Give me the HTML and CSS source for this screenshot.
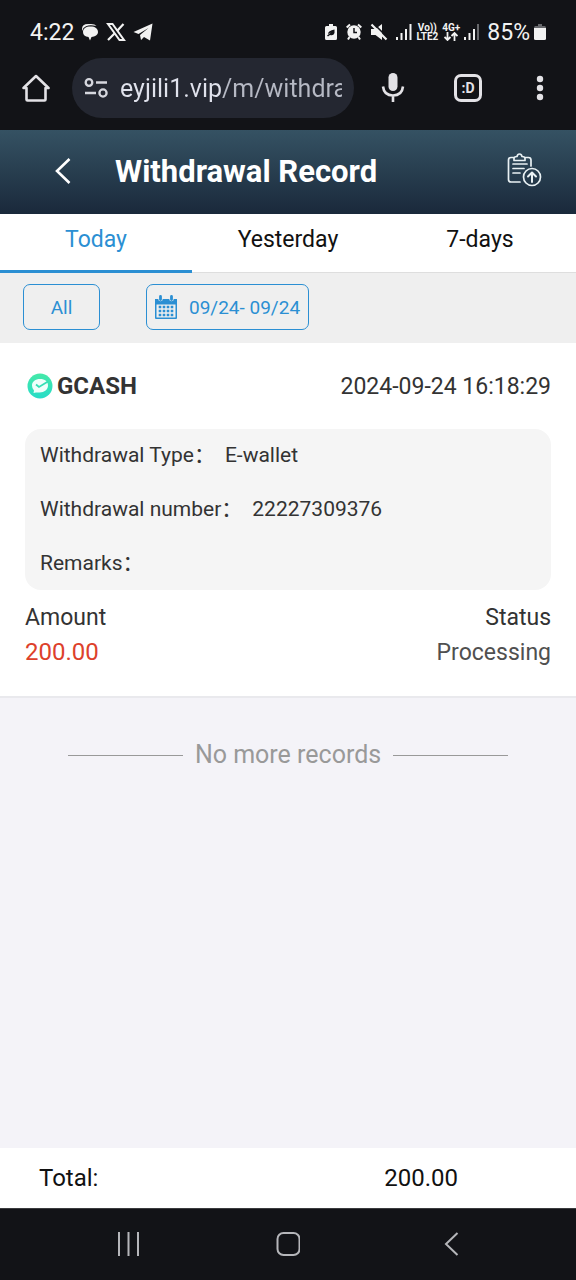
FILE: index.html
```html
<!DOCTYPE html>
<html lang="en">
<head>
<meta charset="utf-8">
<meta name="viewport" content="width=device-width, initial-scale=1">
<title>Withdrawal Record</title>
<link rel="stylesheet" href="styles.css">
</head>
<body>
<div class="status-bar">
  <div class="status-left">
    <span class="clock">4:22</span>
    <svg width="18" height="18" viewBox="0 0 18 18" fill="#f2f2f2"><path d="M1 6Q1 1 7 1H10Q14 1 15.500 3Q9 1.500 5 3.200Q2 4.500 1 8Z"/><path d="M9.500 3.500C14 3.500 17 5.500 17 9C17 12 14 13.500 10.500 14L9 17.500L7.500 14C4 13.500 2 12 2 9C2 5.500 5 3.500 9.500 3.500Z"/></svg>
    <svg width="20" height="18" viewBox="0 0 20 18" fill="none" stroke="#f2f2f2"><path stroke-width="2" d="M2 1H6.500L18 17H13.500Z"/><path stroke-width="2.200" d="M17.500 1L11 8M8.500 10.500L2 17"/></svg>
    <svg width="20" height="18" viewBox="0 0 20 18" fill="#f2f2f2"><path d="M19.500 .500L17 17.500L11 14L8 17L7 12L15.500 5L5.500 11L.500 9Z"/></svg>
  </div>
  <div class="status-right">
    <svg width="12" height="18" viewBox="0 0 12 18"><path fill="#f2f2f2" d="M4 1H8V3H10.500Q12 3 12 4.500V15.500Q12 17 10.500 17H1.500Q0 17 0 15.500V4.500Q0 3 1.500 3H4Z"/><path fill="#121317" d="M9.500 6.500V10Q8.500 13 5 12L3 13.500L2 12.500L6 9.500L3 11Q3 7.500 9.500 6.500Z"/></svg>
    <svg class="alarm" width="16" height="18" viewBox="0 0 16 18"><path fill="none" stroke="#f2f2f2" stroke-width="2" d="M.700 4.500L4 1.500M15.300 4.500L12 1.500M3.500 14L2 16.500M12.500 14L14 16.500"/><circle cx="8" cy="9" r="6.700" fill="#f2f2f2"/><path fill="none" stroke="#121317" stroke-width="1.500" d="M8 5V9.500H11"/></svg>
    <svg class="mute" width="18" height="18" viewBox="0 0 18 18"><path fill="#f2f2f2" d="M1 6H5.500L12 1V17L5.500 12H1Z"/><path stroke="#121317" stroke-width="1.600" d="M4 1L18 15"/><path stroke="#f2f2f2" stroke-width="2.200" d="M1.500 1.500L16.500 16.500"/></svg>
    <svg class="signal" width="16" height="18" viewBox="0 0 16 18" fill="#f2f2f2"><path d="M0 14h2v3H0zM4.500 10h2v7h-2zM9 6h2v11H9zM13.500 1h2v16h-2z"/></svg>
    <span class="network">Vo)) <br>LTE2</span>
    <span class="network network-data">4G+
      <svg width="14" height="9" viewBox="0 0 14 9" fill="none" stroke="#f2f2f2" stroke-width="1.800"><path d="M3.500 0V8M.500 5L3.500 8L6.500 5M10.500 9V1M7.500 4L10.500 1L13.500 4"/></svg>
    </span>
    <svg width="16" height="18" viewBox="0 0 16 18" fill="#f2f2f2"><path d="M0 14h2v3H0zM4.500 10h2v7h-2zM9 6h2v11H9z"/><path fill="#66676b" d="M13 1h2v16h-2z"/></svg>
    <span class="percent">85%</span>
    <svg width="12" height="18" viewBox="0 0 12 18"><path fill="#66676b" d="M4 1H8V3H10.500Q12 3 12 5H0Q0 3 1.500 3H4Z"/><path fill="#f2f2f2" d="M0 5H12V15.500Q12 17 10.500 17H1.500Q0 17 0 15.500Z"/></svg>
  </div>
</div>

<div class="browser-bar">
  <button class="browser-button" aria-label="Home"><svg width="28" height="28" viewBox="0 0 28 28" fill="none" stroke="#e3e2e6" stroke-width="2.600" stroke-linejoin="round" stroke-linecap="round"><path d="M1.500 14L14 2L26.500 14H23.500V25.500Q23.500 26.500 22.500 26.500H5.500Q4.500 26.500 4.500 25.500V14Z"/></svg></button>
  <div class="address">
    <svg width="24" height="22" viewBox="0 0 24 22" fill="none" stroke="#d6d7de" stroke-width="2.300"><circle cx="5" cy="5.500" r="3.300"/><path d="M12 5.500H23M1 16H12"/><circle cx="19" cy="16" r="3.600"/></svg>
    <input class="url" type="text" aria-label="Address" value="eyjili1.vip/m/withdrawalRecord">
  </div>
  <button class="browser-button mic" aria-label="Voice search"><svg width="24" height="32" viewBox="0 0 24 32"><rect x="7.500" y="1" width="9" height="18" rx="4.500" fill="#e3e2e6"/><path d="M2 14.500Q3 23.500 12 23.500Q21 23.500 22 14.500M12 23V30" fill="none" stroke="#e3e2e6" stroke-width="2.600"/></svg></button>
  <button class="tabs-count" aria-label="Open tabs">:D</button>
  <button class="browser-button" aria-label="More"><svg width="8" height="26" viewBox="0 0 8 26" fill="#e3e2e6"><circle cx="4" cy="4" r="3.200"/><circle cx="4" cy="13" r="3.200"/><circle cx="4" cy="22" r="3.200"/></svg></button>
</div>

<header class="page-header">
  <button class="header-button" aria-label="Back"><svg width="16" height="26" viewBox="0 0 16 26" fill="none" stroke="#fff" stroke-width="2.600"><path d="M14.500 1L2 13L14.500 25"/></svg></button>
  <h1>Withdrawal Record</h1>
  <button class="header-button" aria-label="Withdraw"><svg width="36" height="36" viewBox="0 0 36 36" fill="none" stroke="#e9f1f4" stroke-width="1.700" stroke-linecap="round" stroke-linejoin="round"><path d="M14 29H5Q2.500 29 2.500 26.500V7Q2.500 4.500 5 4.500H8M19 4.500H22.500Q25 4.500 25 7V13"/><path d="M8 7.500V5Q8.500 3.500 11 3.500Q11.500 1 13.500 1Q15.500 1 16 3.500Q18.500 3.500 19 5V7.500Z"/><path d="M7 11H21M7 15.500H18M7 20H14"/><circle cx="26" cy="24" r="8.500"/><path stroke-width="2" d="M26 29V19.500M22 23.500L26 19.500L30 23.500"/></svg></button>
</header>

<nav class="tabs">
  <button class="tab tab-active">Today</button>
  <button class="tab">Yesterday</button>
  <button class="tab">7-days</button>
</nav>

<div class="filters">
  <button class="filter filter-type">All</button>
  <button class="filter filter-date">
    <svg width="22" height="24" viewBox="0 0 22 24"><path fill="#2b8fd3" d="M0 4H22V23Q22 24 21 24H1Q0 24 0 23Z"/><path fill="#efefef" d="M1.500 9.500h19v13h-19z"/><path stroke="#efefef" stroke-width="4.500" stroke-linecap="round" d="M5.500 2.500V4M16.500 2.500V4"/><path stroke="#2b8fd3" stroke-width="2.800" stroke-linecap="round" d="M5.500 1.500V4.500M16.500 1.500V4.500"/><path stroke="#2b8fd3" stroke-width="2.400" stroke-dasharray="2.600 1.400" d="M3.700 12H19M3.700 16H19M3.700 20H19"/></svg>
    <span>09/24- 09/24</span>
  </button>
</div>

<main class="records">
  <article class="record">
    <div class="record-head">
      <div class="method">
        <svg width="26" height="26" viewBox="0 0 26 26"><defs><linearGradient id="mint" x2="0" y2="1"><stop stop-color="#45e9a8"/><stop offset="1" stop-color="#27dcc8"/></linearGradient></defs><circle cx="13" cy="13" r="12.500" fill="url(#mint)"/><path fill="#effffb" d="M13 6C18 6 21 8.500 21 12.500C21 16.500 17.500 19.500 12.500 19.500H9L6.500 20L7 17.500Q5 15.500 5 12.500C5 8.500 8.500 6 13 6Z"/><path d="M9 11.500L12 14L21 8.500" fill="none" stroke="#36dfb6" stroke-width="1.800"/></svg>
        <strong>GCASH</strong>
      </div>
      <time datetime="2024-09-24T16:18:29">2024-09-24 16:18:29</time>
    </div>
    <dl class="details">
      <div class="detail"><dt>Withdrawal Type：</dt><dd>E-wallet</dd></div>
      <div class="detail"><dt>Withdrawal number：</dt><dd>22227309376</dd></div>
      <div class="detail"><dt>Remarks：</dt><dd></dd></div>
    </dl>
    <div class="summary">
      <div><p>Amount</p><p class="amount">200.00</p></div>
      <div class="status"><p>Status</p><p class="state">Processing</p></div>
    </div>
  </article>
  <p class="end">No more records</p>
</main>

<footer class="total"><span>Total:</span><span>200.00</span></footer>

<div class="system-nav">
  <button aria-label="Recent apps"><svg width="24" height="24" viewBox="0 0 24 24" stroke="#b5b6ba" stroke-width="2"><path d="M2 0V24M11.500 0V24M21 0V24"/></svg></button>
  <button aria-label="Home screen"><svg width="24" height="24" viewBox="0 0 24 24" fill="none" stroke="#b5b6ba" stroke-width="2"><rect x="1.500" y="1" width="22" height="22" rx="6"/></svg></button>
  <button aria-label="Back"><svg width="24" height="24" viewBox="0 0 24 24" fill="none" stroke="#b5b6ba" stroke-width="2"><path d="M22.500 1L11 12L22.500 23"/></svg></button>
</div>
</body>
</html>
```
FILE: styles.css
```css
* {
  box-sizing: border-box;
}

body {
  display: flex;
  flex-direction: column;
  min-height: 100vh;
  margin: 0;
  background: #f4f3f8;
  color: #333;
  font-family: Roboto, "Noto Sans CJK SC", sans-serif;
  font-size: 23px;
}

h1,
p,
dl,
dd {
  margin: 0;
}

button {
  padding: 0;
  border: 0;
  background: none;
  color: inherit;
  font: inherit;
}

svg {
  display: block;
  flex: none;
}

.status-bar {
  display: flex;
  justify-content: space-between;
  align-items: center;
  height: 56px;
  padding: 8px 30px 0;
  background: #121317;
  color: #f2f2f2;
}

.status-left,
.status-right {
  display: flex;
  align-items: center;
}

.status-left {
  gap: 7px;
}

.status-right {
  gap: 4px;
}

.clock {
  font-size: 23px;
}

.percent {
  margin-left: 3px;
  font-size: 23px;
}

.alarm {
  margin-left: 5px;
}

.mute,
.signal {
  margin-left: 4px;
}

.network {
  font-size: 10px;
  font-weight: 700;
  line-height: 9px;
  text-align: center;
}

.network-data svg {
  margin: 0 auto;
}

.browser-bar {
  display: flex;
  align-items: center;
  height: 74px;
  padding: 0 32px 10px 22px;
  background: #121317;
  color: #e3e2e6;
}

.address {
  display: flex;
  flex: 1;
  align-items: center;
  gap: 12px;
  min-width: 0;
  height: 60px;
  margin-left: 22px;
  padding: 0 12px;
  border-radius: 30px;
  background: #242731;
}

.url {
  flex: 1;
  min-width: 0;
  height: 40px;
  padding: 0;
  border: 0;
  background: linear-gradient(90deg, #e0e2ec 102px, #b6b9c4 102px);
  -webkit-background-clip: text;
  background-clip: text;
  color: transparent;
  font: 25px Roboto, sans-serif;
}

.mic {
  margin: 0 49px 0 27px;
}

.tabs-count {
  width: 28px;
  height: 28px;
  margin-right: 54px;
  border: 3px solid #e3e2e6;
  border-radius: 7px;
  font-size: 14px;
  font-weight: 700;
  line-height: 20px;
}

.page-header {
  display: flex;
  align-items: center;
  height: 84px;
  padding: 0 34px 2px 55px;
  background: linear-gradient(#355263, #1a293b);
  color: #fff;
}

.page-header h1 {
  flex: 1;
  margin-left: 44px;
  font-size: 31px;
  font-weight: 700;
}

.tabs {
  display: grid;
  grid-template-columns: repeat(3, 1fr);
  background: #fff;
  color: #111;
}

.tab {
  height: 59px;
  padding-bottom: 8px;
  border-bottom: 1px solid #dedede;
}

.tab-active {
  padding-bottom: 6px;
  border-bottom: 3px solid #2b8fd3;
  color: #2b8fd3;
}

.filters {
  display: flex;
  gap: 46px;
  padding: 11px 23px 13px;
  background: #efefef;
  color: #2b8fd3;
}

.filter {
  height: 46px;
  border: 1px solid #2b8fd3;
  border-radius: 7px;
  font-size: 19px;
}

.filter-type {
  width: 77px;
}

.filter-date {
  display: flex;
  align-items: center;
  gap: 12px;
  padding: 0 8px;
}

.records {
  flex: 1;
}

.record {
  padding: 24px 25px 26px;
  border-bottom: 2px solid #e9e9ed;
  background: #fff;
}

.record-head,
.method,
.summary {
  display: flex;
  align-items: center;
}

.record-head,
.summary {
  justify-content: space-between;
}

.record-head {
  height: 38px;
}

.method {
  gap: 4px;
  padding-left: 2px;
}

.method strong {
  font-size: 24px;
}

.details {
  margin: 24px 0 10px;
  padding: 0 15px;
  border-radius: 16px;
  background: #f5f5f5;
  font-size: 21px;
}

.detail {
  display: flex;
  gap: 10px;
  height: 54px;
  line-height: 52px;
}

.detail:last-child {
  height: 53px;
}

.summary p {
  line-height: 35px;
}

.status {
  text-align: right;
}

.summary .amount {
  color: #dd412b;
  font-size: 24px;
}

.state {
  color: #505050;
}

.end {
  display: flex;
  align-items: center;
  gap: 12px;
  padding: 41px 68px;
  color: #999;
  font-size: 25px;
  line-height: 32px;
}

.end::before,
.end::after {
  content: "";
  flex: 1;
  height: 1px;
  background: #999;
}

.total {
  display: grid;
  grid-template-columns: 9fr 5fr;
  align-items: center;
  height: 60px;
  padding-left: 39px;
  background: #fff;
  color: #111;
  font-size: 24px;
}

.system-nav {
  display: flex;
  justify-content: space-between;
  align-items: center;
  height: 72px;
  padding: 0 117px 2px;
  border-top: 1px solid #3a3b3e;
  background: #121317;
}
```
